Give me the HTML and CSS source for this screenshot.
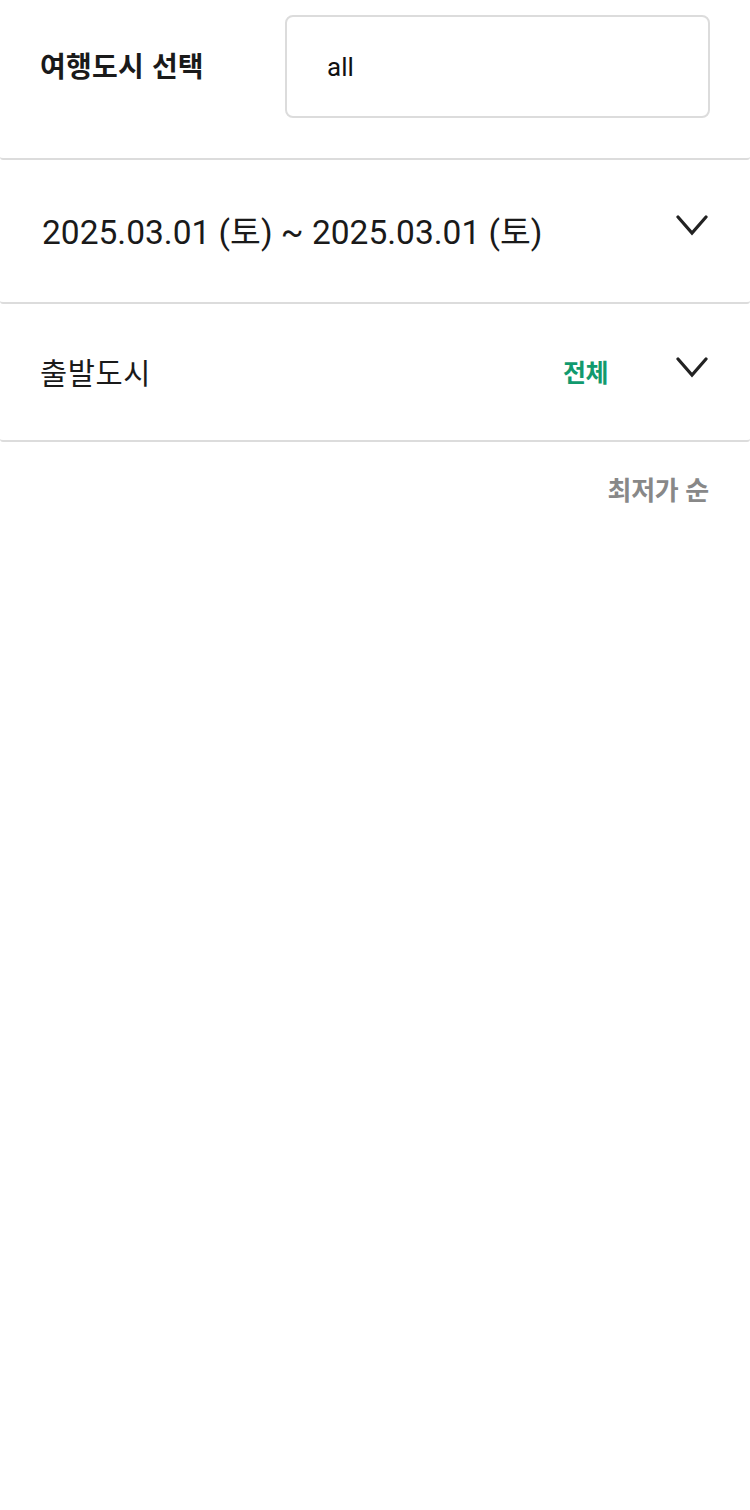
FILE: index.html
```html
<!DOCTYPE html>
<html lang="ko">
<head>
<meta charset="utf-8">
<title>여행도시 선택</title>
<link rel="stylesheet" href="styles.css">
</head>
<body>
<div class="page">
  <section class="row row-city">
    <span class="city-label">여행도시 선택</span>
    <div class="city-input">all</div>
  </section>
  <section class="row row-date">
    <span class="date-text">2025.03.01 (토) ~ 2025.03.01 (토)</span>
    <svg class="chev" width="32" height="22" viewBox="0 0 32 22"><path d="M2 3 L16 19 L30 3" fill="none" stroke="#222" stroke-width="3.2" stroke-linecap="round" stroke-linejoin="miter"/></svg>
  </section>
  <section class="row row-depart">
    <span class="depart-label">출발도시</span>
    <span class="depart-value">전체</span>
    <svg class="chev" width="32" height="22" viewBox="0 0 32 22"><path d="M2 3 L16 19 L30 3" fill="none" stroke="#222" stroke-width="3.2" stroke-linecap="round" stroke-linejoin="miter"/></svg>
  </section>
  <div class="sort-bar">
    <span class="sort">최저가 순</span>
  </div>
</div>
</body>
</html>
```
FILE: styles.css
```css
html, body {
  margin: 0;
  padding: 0;
  background: #fff;
}
body {
  font-family: "Roboto", "Noto Sans CJK KR", sans-serif;
  color: #1a1a1a;
}
.page {
  width: 750px;
}
.row {
  display: flex;
  align-items: center;
  box-sizing: border-box;
  border-bottom: 2px solid #dcdcdc;
  border-radius: 0 0 3px 3px;
}
.row-city {
  height: 160px;
  padding: 15px 40px 40px 40px;
  align-items: flex-start;
}
.city-label {
  font-family: "Noto Sans CJK KR", sans-serif;
  font-weight: 700;
  font-size: 28px;
  letter-spacing: 0.2px;
  line-height: 100px;
  width: 245px;
}
.city-input {
  box-sizing: border-box;
  width: 425px;
  height: 103px;
  border: 2px solid #dcdcdc;
  border-radius: 8px;
  padding-left: 40px;
  display: flex;
  align-items: center;
  font-size: 26px;
  color: #111;
}
.row-date {
  height: 144px;
  padding: 0 42px 4px 42px;
}
.date-text {
  flex: 1;
  font-size: 33.5px;
  color: #1a1a1a;
}
.chev {
  display: block;
  flex: none;
  margin-top: -8px;
}
.row-depart {
  height: 138px;
  padding: 0 42px 2px 40px;
}
.depart-label {
  flex: 1;
  font-family: "Noto Sans CJK KR", sans-serif;
  font-size: 29.5px;
  letter-spacing: 0.6px;
}
.depart-value {
  font-family: "Noto Sans CJK KR", sans-serif;
  font-weight: 700;
  font-size: 25px;
  letter-spacing: -0.5px;
  color: #119a6e;
  margin-right: 68px;
}
.sort-bar {
  display: flex;
  justify-content: flex-end;
  padding: 28px 41px 0 0;
}
.sort {
  font-family: "Noto Sans CJK KR", sans-serif;
  font-weight: 700;
  font-size: 26px;
  letter-spacing: -0.3px;
  color: #888;
}
```
